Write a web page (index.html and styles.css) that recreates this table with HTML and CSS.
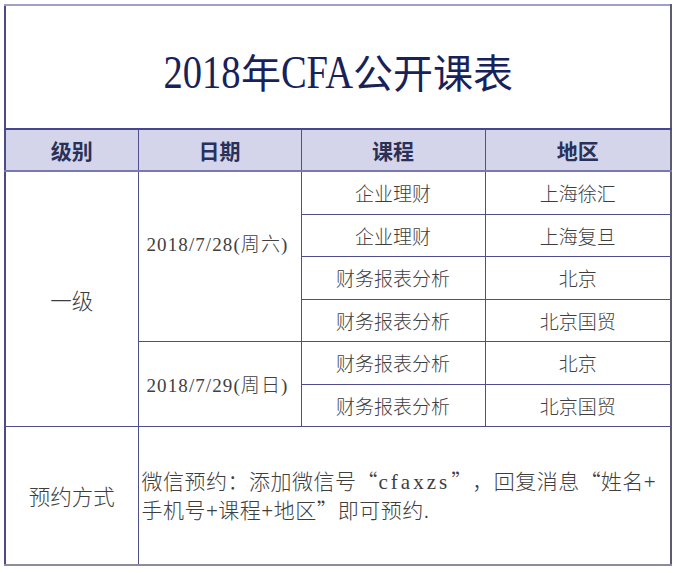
FILE: index.html
```html
<!DOCTYPE html>
<html lang="zh-CN">
<head>
<meta charset="utf-8">
<title>2018年CFA公开课表</title>
<link rel="stylesheet" href="styles.css">
</head>
<body>
<table class="schedule">
  <colgroup>
    <col class="c-level">
    <col class="c-date">
    <col class="c-course">
    <col class="c-place">
  </colgroup>
  <tr class="title-row">
    <td colspan="4" class="title"><span class="lat">2018</span>年<span class="lat">CFA</span>公开课表</td>
  </tr>
  <tr class="head-row">
    <th>级别</th>
    <th>日期</th>
    <th>课程</th>
    <th>地区</th>
  </tr>
  <tr class="row">
    <td rowspan="6" class="level">一级</td>
    <td rowspan="4" class="date date-first">2018/7/28(周六)</td>
    <td>企业理财</td>
    <td>上海徐汇</td>
  </tr>
  <tr class="row">
    <td>企业理财</td>
    <td>上海复旦</td>
  </tr>
  <tr class="row">
    <td>财务报表分析</td>
    <td>北京</td>
  </tr>
  <tr class="row">
    <td>财务报表分析</td>
    <td>北京国贸</td>
  </tr>
  <tr class="row">
    <td rowspan="2" class="date">2018/7/29(周日)</td>
    <td>财务报表分析</td>
    <td>北京</td>
  </tr>
  <tr class="row">
    <td>财务报表分析</td>
    <td>北京国贸</td>
  </tr>
  <tr class="book-row">
    <td class="level">预约方式</td>
    <td colspan="3" class="book">微信预约：添加微信号<span class="q">“</span><span class="id">cfaxzs</span><span class="q">”</span>，回复消息<span class="q">“</span>姓名<span class="plus">+</span><wbr>手机号<span class="plus">+</span>课程<span class="plus">+</span>地区<span class="q">”</span>即可预约.</td>
  </tr>
</table>
</body>
</html>
```
FILE: styles.css
```css
html, body {
  margin: 0;
  padding: 0;
  background: #ffffff;
}

body {
  padding: 4px 0 0 4px;
  font-family: "Liberation Serif", "Noto Sans CJK SC", serif;
}

.schedule {
  border-collapse: collapse;
  table-layout: fixed;
  width: 666px;
  border-top: 2px solid #a29fc4;
  border-left: 2px solid #4d4a86;
  border-right: 2px solid #5c5b70;
  border-bottom: 2px solid #8d8c9c;
}

.c-level { width: 133px; }
.c-date { width: 163px; }
.c-course { width: 184px; }
.c-place { width: 186px; }

.schedule td,
.schedule th {
  border: 1px solid #4f4e8e;
  padding: 0;
  text-align: center;
  vertical-align: middle;
  color: #4a4a4a;
  font-size: 19px;
  font-weight: 400;
}

.schedule .title {
  height: 114px;
  border-left: 2px solid #4d4a86;
  border-right: 2px solid #5c5b70;
  border-top: 2px solid #a29fc4;
  border-bottom: 2px solid #47458c;
  font-family: "Noto Sans CJK SC", sans-serif;
  font-size: 40px;
  color: #18225a;
  padding-top: 8px;
  padding-left: 0;
}

.title .lat {
  display: inline-block;
  font-family: "Liberation Serif", serif;
  font-size: 47px;
  transform: scaleX(0.82);
  margin: 0 -8px;
}

.head-row th {
  height: 40px;
  background: #d4d5eb;
  color: #2a3158;
  font-family: "Noto Sans CJK SC", sans-serif;
  font-weight: 700;
  font-size: 21px;
  border-bottom: 2px solid #7a78b4;
}

.row td {
  height: 41.5px;
  font-family: "Noto Sans CJK SC", sans-serif;
  font-weight: 300;
  color: #3e3e3e;
}

.schedule .date {
  font-family: "Liberation Serif", "Noto Sans CJK SC", serif;
  font-size: 19px;
  letter-spacing: 1.1px;
  color: #404040;
  padding-bottom: 2px;
  padding-right: 4px;
}

.schedule .date-first {
  padding-bottom: 28px;
}

.schedule .level {
  font-family: "Noto Sans CJK SC", sans-serif;
  font-weight: 300;
  font-size: 21.5px;
  color: #3e3e3e;
}

.book-row td {
  height: 137px;
}

.schedule .book {
  text-align: left;
  padding-left: 3px;
  padding-right: 0;
  font-family: "Noto Sans CJK SC", sans-serif;
  font-weight: 300;
  font-size: 21px;
  line-height: 27px;
  letter-spacing: 0.5px;
  color: #3e3e3e;
}

.book .q {
  display: inline-block;
  width: 1em;
  text-align: center;
}

.book .id {
  font-family: "Liberation Serif", serif;
  letter-spacing: 3px;
  padding: 0 1px;
}

.book .plus {
  font-family: "Liberation Serif", serif;
}
```
